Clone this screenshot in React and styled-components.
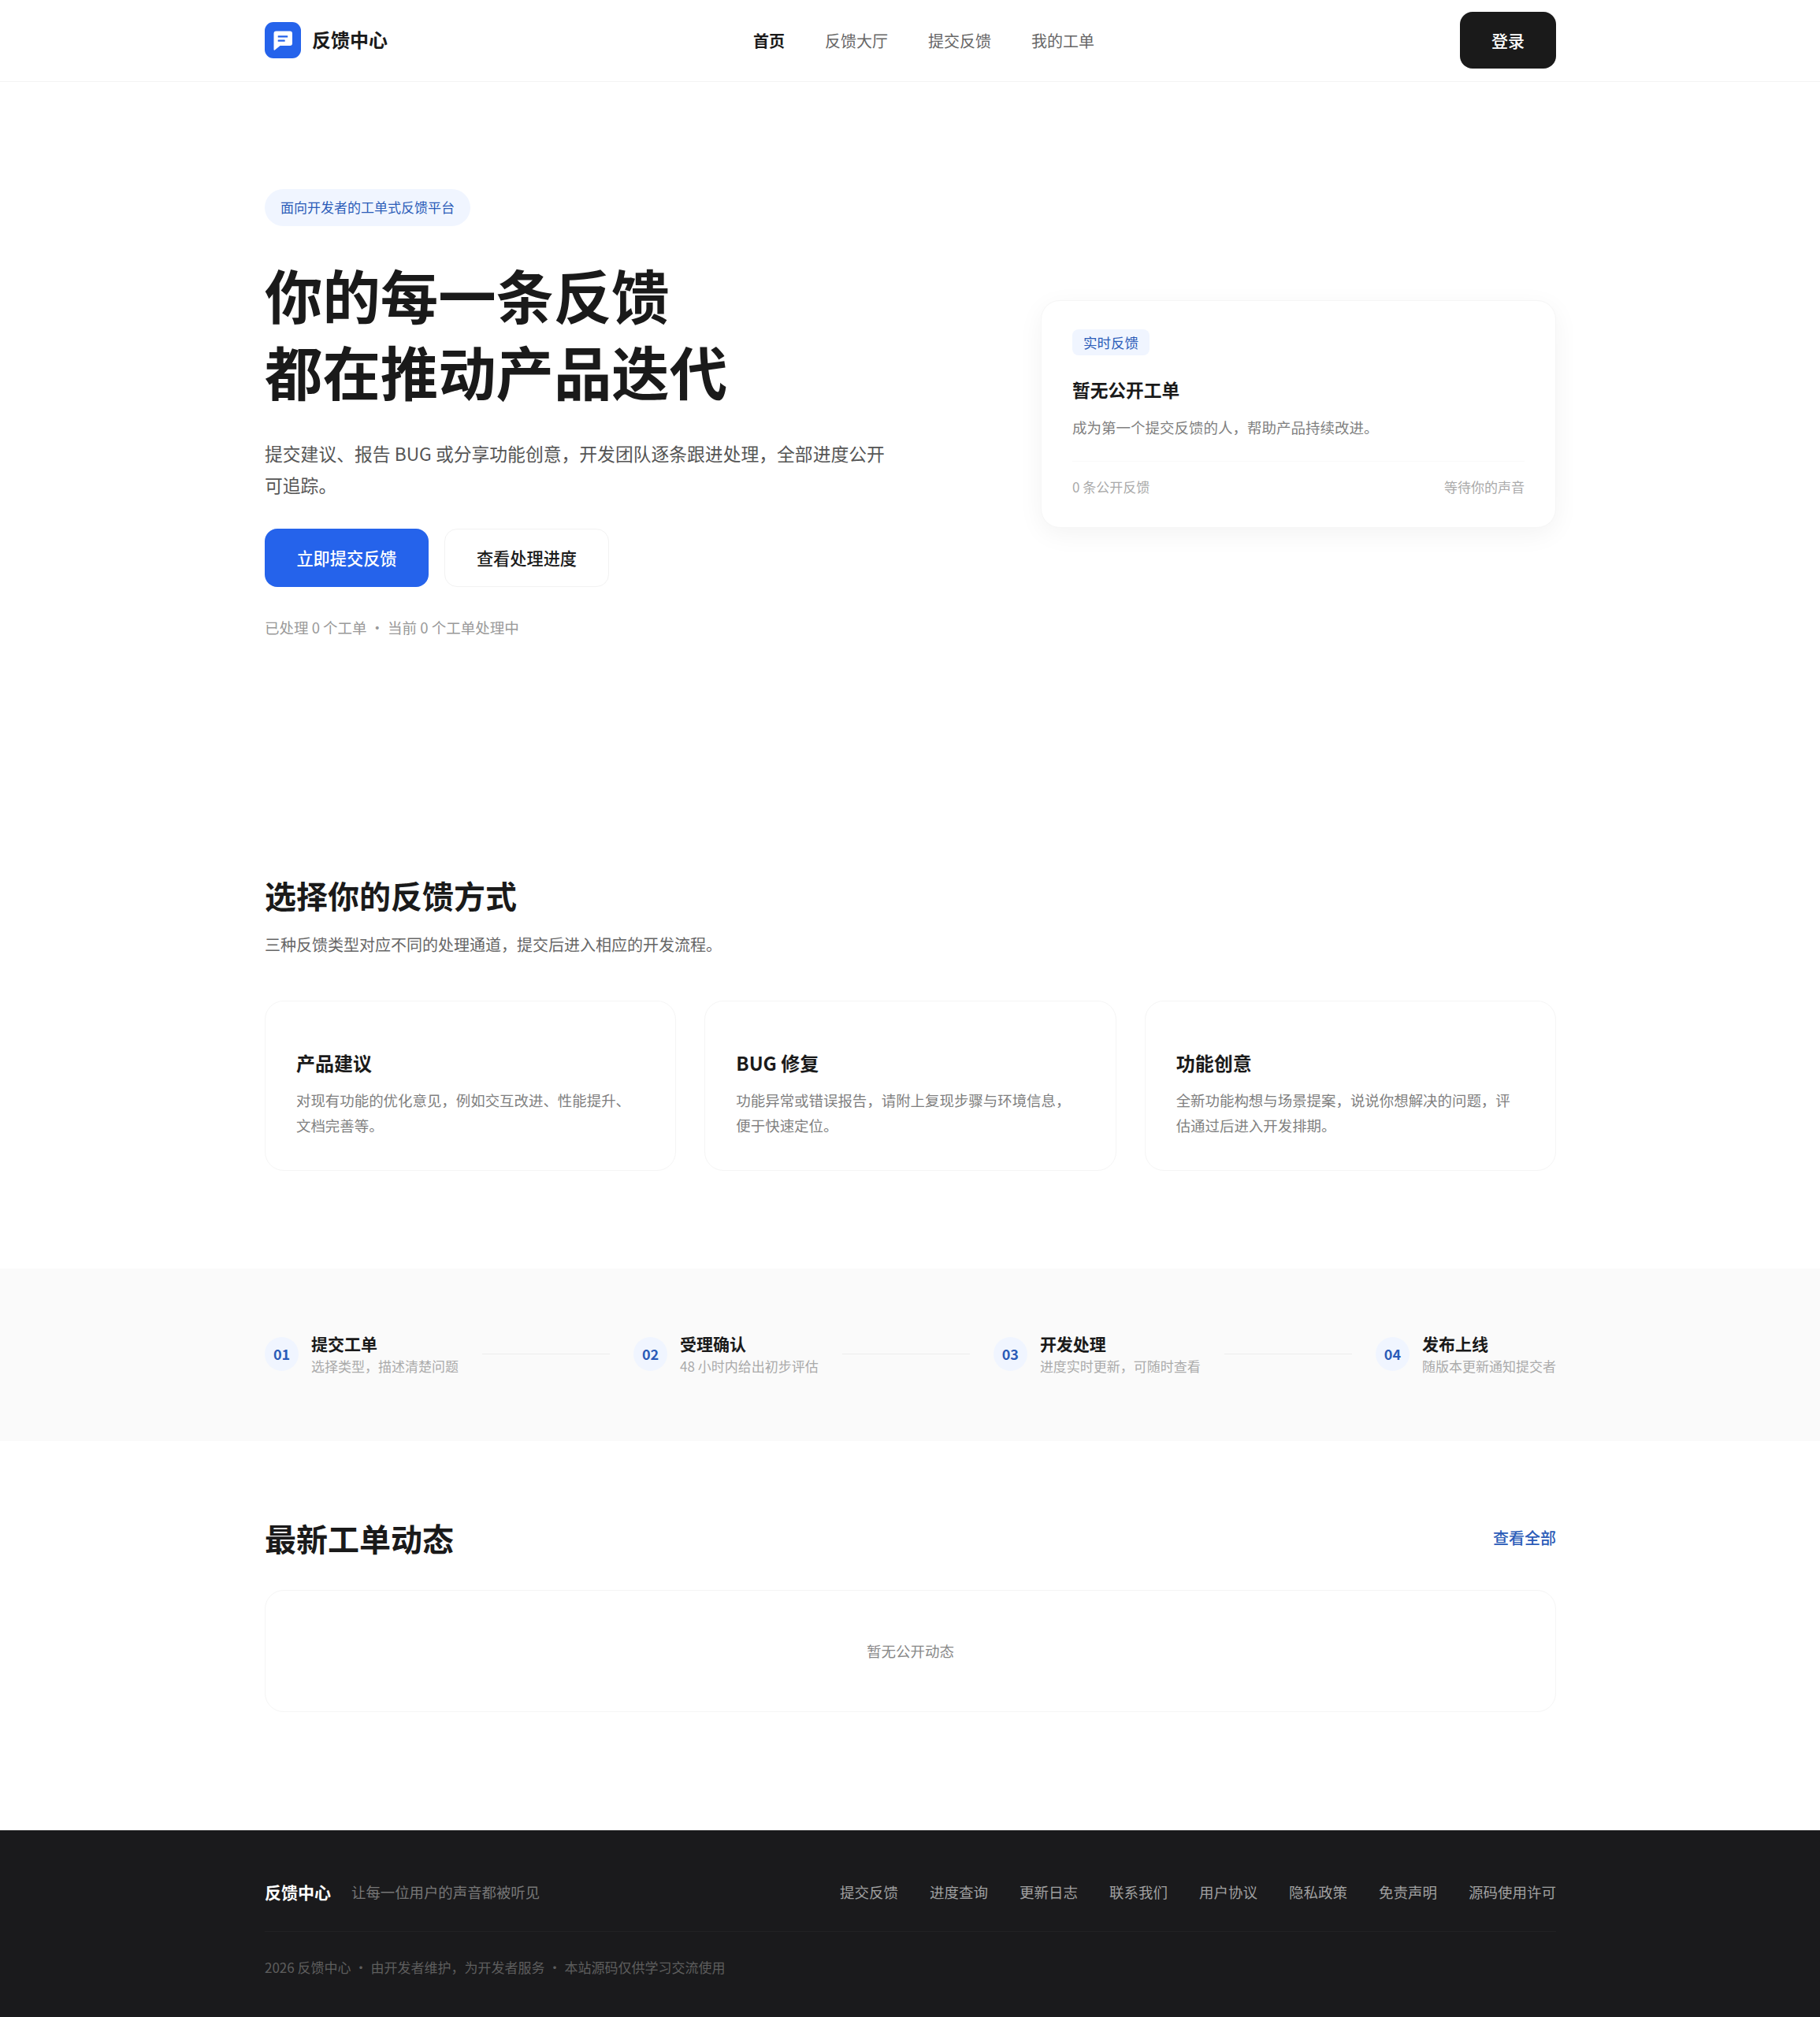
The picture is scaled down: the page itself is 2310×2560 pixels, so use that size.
import React from 'react';
import styled, { createGlobalStyle, css } from 'styled-components';

const STEPS = [
  { no: '01', title: '提交工单', text: '选择类型，描述清楚问题' },
  { no: '02', title: '受理确认', text: '48 小时内给出初步评估' },
  { no: '03', title: '开发处理', text: '进度实时更新，可随时查看' },
  { no: '04', title: '发布上线', text: '随版本更新通知提交者' },
];

const CHANNELS = [
  { title: '产品建议', text: '对现有功能的优化意见，例如交互改进、性能提升、文档完善等。' },
  { title: 'BUG 修复', text: '功能异常或错误报告，请附上复现步骤与环境信息，便于快速定位。' },
  { title: '功能创意', text: '全新功能构想与场景提案，说说你想解决的问题，评估通过后进入开发排期。' },
];

const NAV_LINKS = ['首页', '反馈大厅', '提交反馈', '我的工单'];
const FOOTER_LINKS = ['提交反馈', '进度查询', '更新日志', '联系我们', '用户协议', '隐私政策', '免责声明', '源码使用许可'];

function App() {
  return (
    <>
      <GlobalStyle />
      <Header>
        <HeaderInner>
          <Logo>
            <LogoMark>
              <svg width="46" height="46" viewBox="0 0 46 46">
                <path d="M14.5 11.5h17.5a3 3 0 0 1 3 3v12.5a3 3 0 0 1-3 3H19.5l-6.7 5.5a.8.8 0 0 1-1.3-.6V14.5a3 3 0 0 1 3-3z" fill="#fff" />
                <rect x="16.7" y="17.2" width="12.5" height="2.2" rx="0.5" fill="#2563eb" />
                <rect x="16.7" y="22.6" width="9" height="2.2" rx="0.5" fill="#2563eb" />
              </svg>
            </LogoMark>
            <LogoText>反馈中心</LogoText>
          </Logo>
          <Nav>
            {NAV_LINKS.map((link, i) => (
              <NavLink key={link} $active={i === 0}>{link}</NavLink>
            ))}
          </Nav>
          <LoginButton>登录</LoginButton>
        </HeaderInner>
      </Header>

      <Hero>
        <HeroLeft>
          <Pill>面向开发者的工单式反馈平台</Pill>
          <HeroTitle>你的每一条反馈<br />都在推动产品迭代</HeroTitle>
          <HeroText>提交建议、报告 BUG 或分享功能创意，开发团队逐条跟进处理，全部进度公开可追踪。</HeroText>
          <HeroActions>
            <PrimaryButton>立即提交反馈</PrimaryButton>
            <SecondaryButton>查看处理进度</SecondaryButton>
          </HeroActions>
          <HeroStats>已处理 0 个工单<Dot>·</Dot>当前 0 个工单处理中</HeroStats>
        </HeroLeft>
        <LiveCard>
          <LiveTag>实时反馈</LiveTag>
          <LiveTitle>暂无公开工单</LiveTitle>
          <LiveText>成为第一个提交反馈的人，帮助产品持续改进。</LiveText>
          <LiveFooter>
            <span>0 条公开反馈</span>
            <span>等待你的声音</span>
          </LiveFooter>
        </LiveCard>
      </Hero>

      <Channels>
        <SectionTitle>选择你的反馈方式</SectionTitle>
        <SectionText>三种反馈类型对应不同的处理通道，提交后进入相应的开发流程。</SectionText>
        <ChannelGrid>
          {CHANNELS.map((c) => (
            <ChannelCard key={c.title}>
              <ChannelTitle>{c.title}</ChannelTitle>
              <ChannelText>{c.text}</ChannelText>
            </ChannelCard>
          ))}
        </ChannelGrid>
      </Channels>

      <StepsBand>
        <StepsInner>
          {STEPS.map((s, i) => (
            <React.Fragment key={s.no}>
              {i > 0 && <StepLine />}
              <Step>
                <StepNo>{s.no}</StepNo>
                <div>
                  <StepTitle>{s.title}</StepTitle>
                  <StepText>{s.text}</StepText>
                </div>
              </Step>
            </React.Fragment>
          ))}
        </StepsInner>
      </StepsBand>

      <Latest>
        <LatestHead>
          <SectionTitle>最新工单动态</SectionTitle>
          <ViewAll>查看全部</ViewAll>
        </LatestHead>
        <EmptyBox>暂无公开动态</EmptyBox>
      </Latest>

      <Footer>
        <FooterInner>
          <FooterTop>
            <FooterBrand>
              <FooterName>反馈中心</FooterName>
              <FooterSlogan>让每一位用户的声音都被听见</FooterSlogan>
            </FooterBrand>
            <FooterLinks>
              {FOOTER_LINKS.map((link) => (
                <FooterLink key={link}>{link}</FooterLink>
              ))}
            </FooterLinks>
          </FooterTop>
          <Copyright>2026 反馈中心<Dot>·</Dot>由开发者维护，为开发者服务<Dot>·</Dot>本站源码仅供学习交流使用</Copyright>
        </FooterInner>
      </Footer>
    </>
  );
}

export default App;

const GlobalStyle = createGlobalStyle`
  * {
    box-sizing: border-box;
  }

  body {
    margin: 0;
    background: #fff;
    color: #1a1a1a;
    font-family: "Noto Sans CJK SC", "Noto Sans", sans-serif;
  }
`;

const pageWidth = css`
  width: 1639px;
  margin-left: 336px;
`;

const Header = styled.header`
  height: 104px;
  border-bottom: 1px solid #f4f4f4;
`;

const HeaderInner = styled.div`
  ${pageWidth}
  height: 102px;
  display: flex;
  align-items: center;
  justify-content: space-between;
`;

const Logo = styled.div`
  display: flex;
  align-items: center;
  gap: 14px;
`;

const LogoMark = styled.div`
  width: 46px;
  height: 46px;
  border-radius: 11px;
  background: #2563eb;
  display: flex;
`;

const LogoText = styled.span`
  margin-bottom: 3px;
  font-size: 24px;
  font-weight: 700;
`;

const Nav = styled.nav`
  display: flex;
  gap: 51px;
`;

const NavLink = styled.a`
  font-size: 20px;
  font-weight: ${(p) => (p.$active ? 700 : 400)};
  color: ${(p) => (p.$active ? '#1a1a1a' : '#666')};
`;

const LoginButton = styled.button`
  width: 122px;
  height: 72px;
  border: 0;
  border-radius: 16px;
  background: #1a1a1a;
  color: #fff;
  font: 500 21px "Noto Sans CJK SC", "Noto Sans", sans-serif;
`;

const Hero = styled.section`
  ${pageWidth}
  padding: 136px 0 297px;
  display: flex;
  align-items: center;
  justify-content: space-between;
`;

const HeroLeft = styled.div`
  width: 800px;
`;

const Pill = styled.div`
  display: inline-flex;
  align-items: center;
  height: 47px;
  padding: 0 20px 2px;
  border-radius: 24px;
  background: #f0f5ff;
  color: #2b5cb8;
  font-size: 17px;
`;

const HeroTitle = styled.h1`
  margin: 38px 0 0;
  font-size: 73.4px;
  line-height: 97px;
  font-weight: 700;
  color: #1a1a1a;
`;

const HeroText = styled.p`
  margin: 37px 0 0;
  font-size: 22.8px;
  line-height: 39.5px;
  color: #555;
`;

const HeroActions = styled.div`
  margin-top: 36px;
  display: flex;
  gap: 20px;
`;

const PrimaryButton = styled.button`
  width: 208px;
  height: 74px;
  padding: 0 0 2px;
  border: 0;
  border-radius: 16px;
  background: #2563eb;
  color: #fff;
  font: 500 21.2px "Noto Sans CJK SC", "Noto Sans", sans-serif;
`;

const SecondaryButton = styled(PrimaryButton)`
  width: 209px;
  border: 1px solid #f2f2f2;
  background: #fff;
  color: #1a1a1a;
`;

const HeroStats = styled.div`
  margin-top: 36px;
  font-size: 18.5px;
  line-height: 30px;
  color: #999;
`;

const Dot = styled.span`
  margin: 0 4px;
`;

const LiveCard = styled.aside`
  width: 654px;
  height: 289px;
  padding: 36px 39px 0;
  border: 1px solid #f6f6f6;
  border-radius: 24px;
  background: #fff;
  box-shadow: 0 8px 32px rgba(0, 0, 0, 0.05);
`;

const LiveTag = styled.div`
  display: inline-flex;
  align-items: center;
  height: 33px;
  padding: 0 14px;
  border-radius: 8px;
  background: #f0f5ff;
  color: #2b5cb8;
  font-size: 17.5px;
`;

const LiveTitle = styled.h3`
  margin: 28px 0 0;
  font-size: 22.7px;
  line-height: 32px;
  font-weight: 700;
`;

const LiveText = styled.p`
  margin: 17px 0 0;
  font-size: 18.5px;
  line-height: 28px;
  color: #808080;
`;

const LiveFooter = styled.div`
  margin-top: 29px;
  padding-top: 18px;
  border-top: 1px solid #fafafa;
  display: flex;
  justify-content: space-between;
  font-size: 17px;
  line-height: 28px;
  color: #aaa;
`;

const Channels = styled.section`
  ${pageWidth}
  padding-bottom: 124px;
`;

const SectionTitle = styled.h2`
  margin: 0;
  font-size: 40px;
  line-height: 56px;
  font-weight: 700;
`;

const SectionText = styled.p`
  margin: 21px 0 0;
  font-size: 20px;
  line-height: 28px;
  color: #666;
`;

const ChannelGrid = styled.div`
  margin-top: 57px;
  display: grid;
  grid-template-columns: repeat(3, 1fr);
  gap: 36px;
`;

const ChannelCard = styled.article`
  height: 216px;
  padding: 61px 39px 0;
  border: 1px solid #f5f5f5;
  border-radius: 24px;
  background: #fff;
`;

const ChannelTitle = styled.h3`
  margin: 0;
  font-size: 24px;
  line-height: 34px;
  font-weight: 700;
`;

const ChannelText = styled.p`
  margin: 15px 0 0;
  font-size: 18.45px;
  line-height: 31.5px;
  color: #808080;
`;

const StepsBand = styled.section`
  height: 219px;
  padding-bottom: 3px;
  background: #fafafa;
  display: flex;
  align-items: center;
`;

const StepsInner = styled.div`
  ${pageWidth}
  display: flex;
  align-items: center;
  justify-content: space-between;
`;

const Step = styled.div`
  display: flex;
  align-items: center;
  gap: 16px;
`;

const StepNo = styled.div`
  width: 43px;
  height: 43px;
  border-radius: 50%;
  background: #f0f5ff;
  color: #2b5cb8;
  font-size: 18px;
  font-weight: 700;
  display: flex;
  align-items: center;
  justify-content: center;
`;

const StepTitle = styled.div`
  font-size: 21px;
  line-height: 28px;
  font-weight: 700;
`;

const StepText = styled.div`
  margin-top: 3px;
  font-size: 17px;
  line-height: 24px;
  color: #aaa;
`;

const StepLine = styled.div`
  width: 162px;
  height: 1px;
  background: #ededed;
`;

const Latest = styled.section`
  ${pageWidth}
  padding: 95px 0 150px;
`;

const LatestHead = styled.div`
  display: flex;
  align-items: center;
  justify-content: space-between;
`;

const ViewAll = styled.a`
  margin-bottom: 2px;
  font-size: 20px;
  font-weight: 500;
  color: #2b5cb8;
`;

const EmptyBox = styled.div`
  margin-top: 38px;
  height: 155px;
  padding-bottom: 2px;
  border: 1px solid #f5f5f5;
  border-radius: 24px;
  display: flex;
  align-items: center;
  justify-content: center;
  font-size: 18.5px;
  color: #888;
`;

const Footer = styled.footer`
  height: 237px;
  padding-top: 54px;
  background: #1a1a1c;
`;

const FooterInner = styled.div`
  ${pageWidth}
`;

const FooterTop = styled.div`
  height: 75px;
  padding-bottom: 27px;
  border-bottom: 1px solid #222224;
  display: flex;
  align-items: center;
  justify-content: space-between;
`;

const FooterBrand = styled.div`
  display: flex;
  align-items: center;
  gap: 26px;
`;

const FooterName = styled.span`
  font-size: 21px;
  font-weight: 700;
  color: #fff;
`;

const FooterSlogan = styled.span`
  font-size: 18.4px;
  color: #777;
`;

const FooterLinks = styled.div`
  display: flex;
  gap: 40px;
`;

const FooterLink = styled.a`
  font-size: 18.5px;
  color: #a0a0a0;
`;

const Copyright = styled.div`
  margin-top: 31px;
  font-size: 17px;
  line-height: 28px;
  color: #5e5e5e;
`;
